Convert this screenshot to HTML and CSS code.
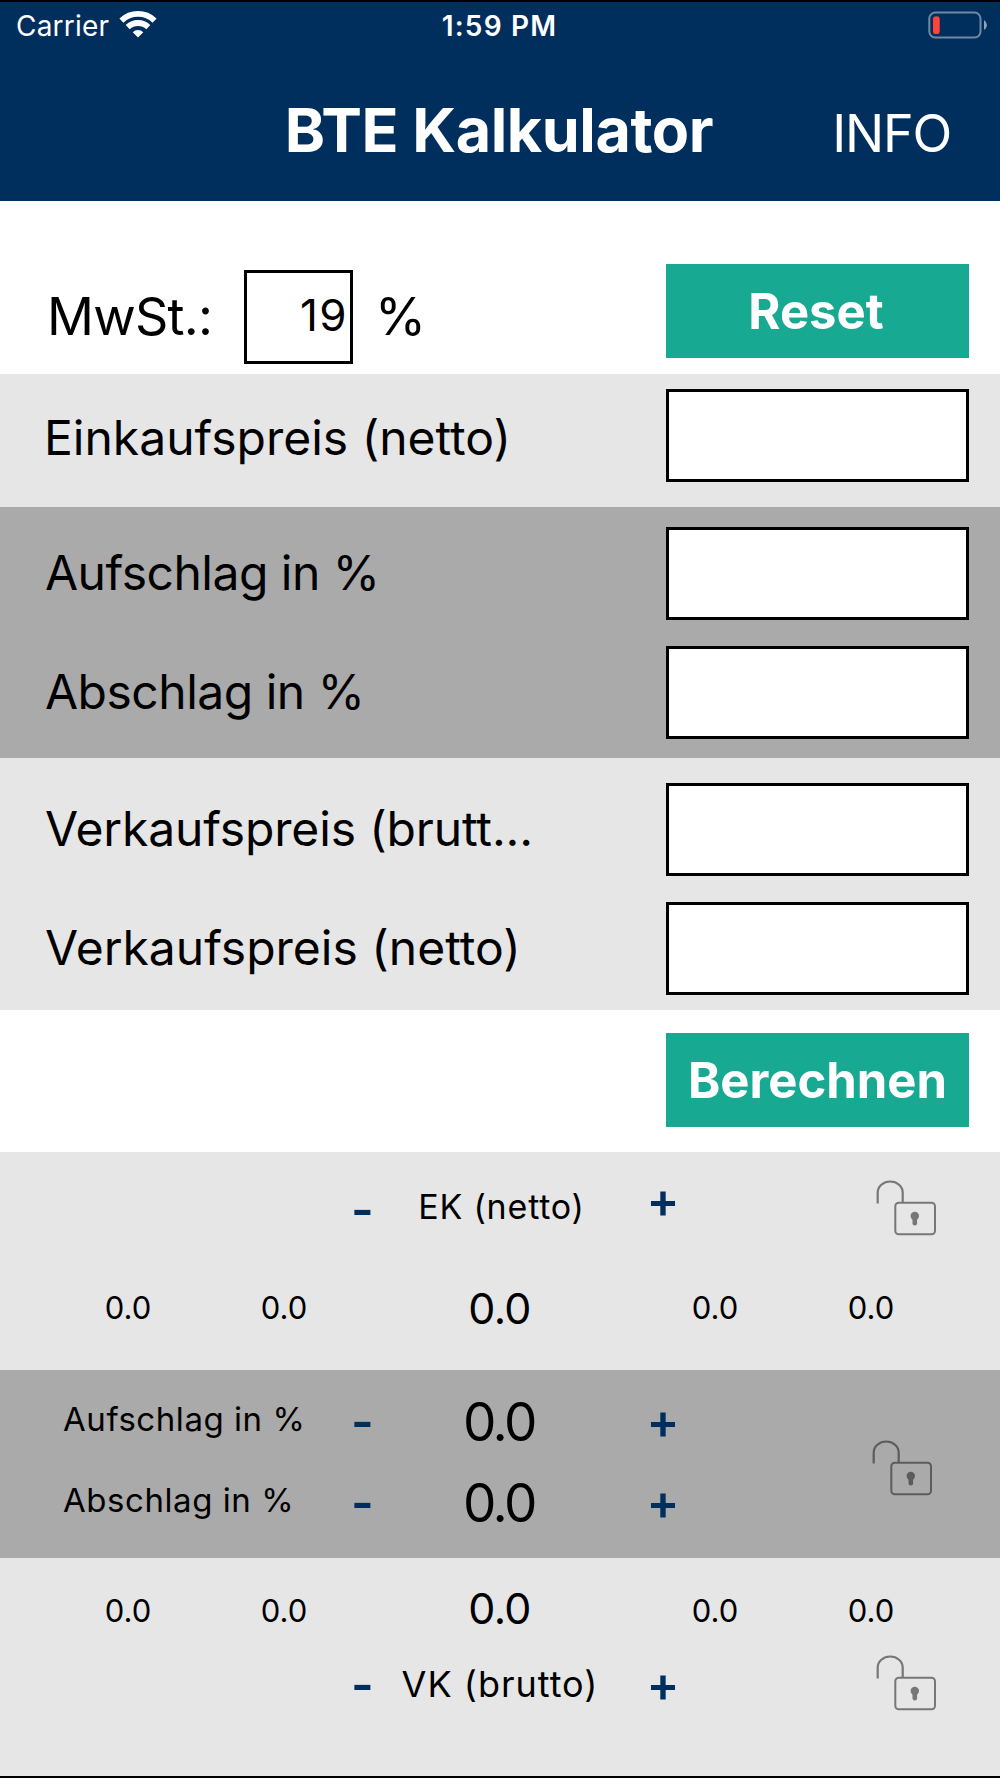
FILE: index.html
```html
<!DOCTYPE html>
<html lang="de">
<head>
    <meta charset="UTF-8">
    <meta name="viewport" content="width=device-width, initial-scale=1.0">
    <title>BTE Kalkulator</title>
    <link rel="stylesheet" href="styles.css">
</head>
<body>
    <svg class="icon-defs" width="0" height="0">
        <symbol id="lock" viewBox="0 0 60 56">
            <path d="M1.7 23.5V12.5a12.5 11 0 0 1 25 0V22.5" fill="none" stroke="currentColor" stroke-width="2.2"/>
            <rect x="19.3" y="22.7" width="39.7" height="31.6" rx="3.5" fill="none" stroke="currentColor" stroke-width="2"/>
            <circle cx="38.8" cy="36" r="4.2" fill="currentColor"/>
            <path d="M38.8 37v6.3" stroke="currentColor" stroke-width="4.6" stroke-linecap="round"/>
        </symbol>
    </svg>

    <!-- Header -->
    <header class="header">
        <div class="status-bar">
            <div class="carrier">
                <span>Carrier</span>
                <svg width="38" height="28" viewBox="0 0 38 28">
                    <g fill="none" stroke="#fff" stroke-width="5.8">
                        <path d="M2.4 10.6a24 24 0 0 1 33.2 0"/>
                        <path d="M8.7 17.1a15 15 0 0 1 20.6 0"/>
                    </g>
                    <path d="M19 27.5l-5.3-5.3a7.6 7.6 0 0 1 10.6 0z" fill="#fff"/>
                </svg>
            </div>
            <span class="time">1:59 PM</span>
            <svg class="battery" width="60" height="28" viewBox="0 0 60 28">
                <rect x="1.3" y="1.6" width="51.2" height="25" rx="6" fill="none" stroke="#708aa5" stroke-width="2"/>
                <rect x="5" y="5.2" width="6.7" height="17.9" rx="3.2" fill="#ff453a"/>
                <path d="M56 9.1q3 2 3 5t-3 5z" fill="#8fa3b8"/>
            </svg>
        </div>
        <div class="title-bar">
            <h1>BTE Kalkulator</h1>
            <a class="info">INFO</a>
        </div>
    </header>

    <!-- Input form -->
    <div class="vat-row">
        <label for="vat">MwSt.:</label>
        <input class="field vat-field" id="vat" type="text" value="19">
        <span class="percent">%</span>
        <button class="btn reset">Reset</button>
    </div>

    <div class="section ek">
        <div class="form-row">
            <label for="ek">Einkaufspreis (netto)</label>
            <input class="field" id="ek" type="text">
        </div>
    </div>

    <div class="section dark markup">
        <div class="form-row">
            <label class="tight" for="aufschlag">Aufschlag in %</label>
            <input class="field" id="aufschlag" type="text">
        </div>
        <div class="form-row">
            <label class="tight" for="abschlag">Abschlag in %</label>
            <input class="field" id="abschlag" type="text">
        </div>
    </div>

    <div class="section vk">
        <div class="form-row">
            <label class="cut" for="vkBrutto">Verkaufspreis (brutt...</label>
            <input class="field" id="vkBrutto" type="text">
        </div>
        <div class="form-row">
            <label for="vkNetto">Verkaufspreis (netto)</label>
            <input class="field" id="vkNetto" type="text">
        </div>
    </div>

    <div class="calc-row">
        <button class="btn">Berechnen</button>
    </div>

    <!-- Results -->
    <div class="result result-ek">
        <div class="step-row">
            <button class="step minus">-</button>
            <span class="name">EK (netto)</span>
            <button class="step plus">+</button>
            <svg class="lock" width="60" height="56"><use href="#lock"/></svg>
        </div>
        <div class="values">
            <span>0.0</span>
            <span>0.0</span>
            <span class="main">0.0</span>
            <span>0.0</span>
            <span>0.0</span>
        </div>
    </div>

    <div class="result dark result-markup">
        <div class="step-row">
            <span class="label">Aufschlag in %</span>
            <button class="step minus">-</button>
            <span class="big">0.0</span>
            <button class="step plus">+</button>
            <span class="label">Abschlag in %</span>
            <button class="step minus">-</button>
            <span class="big">0.0</span>
            <button class="step plus">+</button>
            <svg class="lock" width="60" height="56"><use href="#lock"/></svg>
        </div>
    </div>

    <div class="result result-vk">
        <div class="values">
            <span>0.0</span>
            <span>0.0</span>
            <span class="main">0.0</span>
            <span>0.0</span>
            <span>0.0</span>
        </div>
        <div class="step-row">
            <button class="step minus">-</button>
            <span class="name">VK (brutto)</span>
            <button class="step plus">+</button>
            <svg class="lock" width="60" height="56"><use href="#lock"/></svg>
        </div>
    </div>
</body>
</html>
```
FILE: styles.css
```css
* {
    box-sizing: border-box;
}
body {
    font-family: Inter, "Liberation Sans", sans-serif;
    background-color: #fff;
    color: #000;
    margin: 0;
    width: 1000px;
    height: 1778px;
    border-top: 2px solid #000;
    border-bottom: 2px solid #000;
    display: flex;
    flex-direction: column;
    overflow: hidden;
}
button {
    font-family: inherit;
    border: none;
    padding: 0;
    cursor: pointer;
}
.icon-defs {
    display: none;
}

/* Header */
.header {
    height: 199px;
    background: #002e5d;
    color: #fff;
}
.status-bar {
    height: 48px;
    padding: 0 12px 0 16px;
    display: grid;
    grid-template-columns: 1fr auto 1fr;
    align-items: center;
    font-size: 28px;
}
.carrier {
    display: flex;
    align-items: center;
    gap: 10px;
    letter-spacing: 0.2px;
}
.carrier svg {
    margin-top: -5px;
}
.time {
    font-weight: 600;
    letter-spacing: 1.2px;
    margin-right: 5px;
}
.battery {
    justify-self: end;
    margin-top: -3px;
}
.title-bar {
    height: 159px;
    display: grid;
    grid-template-columns: 1fr auto 1fr;
    align-items: center;
}
.title-bar h1 {
    grid-column: 2;
    margin: 0 2px 0 0;
    font-size: 61px;
    font-weight: 700;
    letter-spacing: -0.4px;
}
.info {
    justify-self: end;
    margin: 7px 49px 0 0;
    font-size: 52px;
    font-weight: 400;
    letter-spacing: -1.2px;
}

/* Form */
.vat-row {
    height: 173px;
    padding: 58px 31px 0 47px;
    display: flex;
    align-items: center;
    font-size: 52px;
}
.vat-row label {
    width: 197px;
    letter-spacing: -0.8px;
}
.field {
    width: 303px;
    height: 93px;
    padding: 0 5px;
    border: 3px solid #000;
    border-radius: 0;
    background: #fff;
    font-family: inherit;
    font-size: 43px;
    text-align: right;
}
.vat-field {
    width: 109px;
    height: 94px;
    padding: 0 2px 3px;
    font-size: 44px;
    letter-spacing: 1.4px;
}
.percent {
    margin-left: 22px;
}
.btn {
    width: 303px;
    height: 94px;
    background: #17a991;
    color: #fff;
    font-size: 49px;
    font-weight: 700;
}
.reset {
    margin: 0 0 11px auto;
    padding-right: 3px;
}
.section,
.result {
    background: #e6e6e6;
}
.dark {
    background: #aaa;
}
.form-row {
    display: flex;
    align-items: center;
    justify-content: space-between;
    padding: 0 31px 0 45px;
    font-size: 48px;
}
.form-row label {
    margin-top: -2px;
}
.form-row .tight {
    letter-spacing: -0.5px;
}
.form-row .cut {
    letter-spacing: -0.15px;
}
.ek {
    height: 133px;
    padding-top: 15px;
}
.ek label {
    margin: 3px 0 0 -1px;
}
.markup {
    height: 251px;
    padding-top: 20px;
    display: flex;
    flex-direction: column;
    gap: 26px;
}
.vk {
    height: 252px;
    padding-top: 25px;
    display: flex;
    flex-direction: column;
    gap: 26px;
}
.calc-row {
    height: 142px;
    padding: 23px 31px 0;
    text-align: right;
}

/* Results */
.step-row {
    display: grid;
    grid-template-columns: 261px 77px 198px 128px 1fr;
    align-items: center;
    padding-left: 63px;
}
.name {
    grid-column: 3;
    text-align: center;
    font-size: 34px;
    letter-spacing: 0.8px;
    margin-left: 3px;
}
.label {
    grid-column: 1;
    font-size: 33px;
    letter-spacing: 0.55px;
    margin-top: -2px;
}
.big {
    text-align: center;
    font-size: 53px;
    letter-spacing: -2.5px;
    margin: 5px 0 0 -2px;
}
.step {
    background: none;
    color: #002e5d;
    font-size: 49px;
    font-weight: 600;
    line-height: 44px;
}
.minus {
    grid-column: 2;
}
.plus {
    grid-column: 4;
}
.lock {
    grid-column: 5;
    margin-left: 149px;
    color: #777;
}
.values {
    display: grid;
    grid-template-columns: 156px 156px 275px 156px 156px;
    align-items: center;
    justify-content: center;
    text-align: center;
    font-size: 31px;
    padding-right: 1px;
}
.values .main {
    font-size: 43px;
    letter-spacing: -0.7px;
}
.result-ek {
    height: 218px;
}
.result-ek .step-row {
    height: 108px;
}
.result-ek .minus {
    margin-top: 7px;
}
.result-ek .plus {
    margin-bottom: 11px;
}
.result-ek .lock {
    margin-top: 4px;
}
.result-ek .values {
    height: 94px;
}
.result-ek .main {
    margin-top: 1px;
}
.result-markup {
    height: 188px;
    padding-top: 9px;
}
.result-markup .step-row {
    grid-template-rows: 81px 81px;
}
.result-markup .step {
    margin-top: 4px;
}
.result-markup .lock {
    grid-row: 1 / 3;
    margin: 15px 0 0 145px;
    color: #5c5c5c;
}
.result-vk {
    flex: 1;
}
.result-vk .values {
    height: 104px;
}
.result-vk .main {
    margin-top: -4px;
}
.result-vk .step-row {
    grid-template-rows: 44px;
}
.result-vk .step {
    margin-top: 2px;
}
.result-vk .lock {
    margin-top: -2px;
}
.result-vk .name {
    font-size: 36px;
    letter-spacing: 1px;
    margin-left: 0;
}
```
